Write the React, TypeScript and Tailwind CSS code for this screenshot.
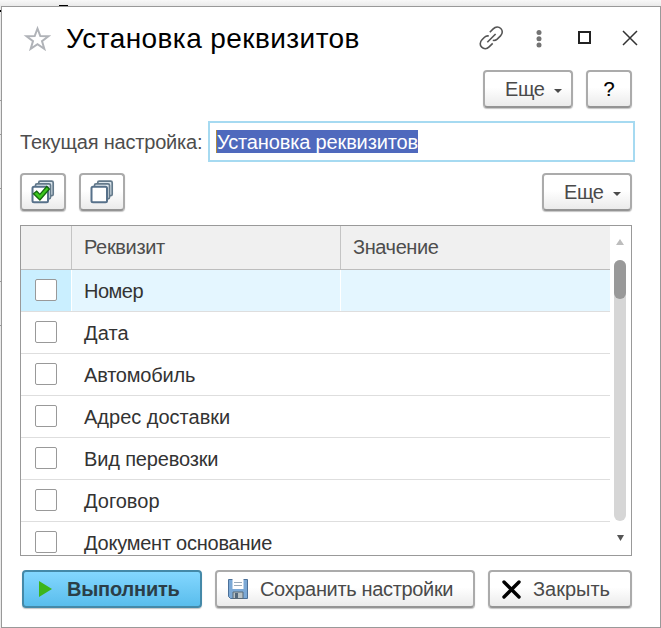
import type { ReactNode } from "react";

const rows = [
  { name: "Номер", tracking: "tracking-[-0.5px]" },
  { name: "Дата", tracking: "tracking-[0.1px]" },
  { name: "Автомобиль", tracking: "tracking-[-0.2px]" },
  { name: "Адрес доставки", tracking: "tracking-normal" },
  { name: "Вид перевозки", tracking: "tracking-[-0.15px]" },
  { name: "Договор", tracking: "tracking-normal" },
  { name: "Документ основание", tracking: "tracking-[-0.24px]" },
];

function Button({ className, children }: { className: string; children: ReactNode }) {
  return (
    <button
      className={
        "flex h-[38px] shrink-0 items-center rounded-[4px] border-2 border-[#ababab] border-b-[#949494] bg-linear-to-b from-white from-45% to-[#ebebeb] text-[#4a4a4a] shadow-[0_1px_1px_#c4c4c4] " +
        className
      }
    >
      {children}
    </button>
  );
}

function MoreButton() {
  return (
    <Button className="w-[90px] pl-[20px]">
      <span className="tracking-[-0.4px]">Еще</span>
      <svg className="ml-[9px] mt-[3px]" width="8" height="4" viewBox="0 0 8 4">
        <path d="M0 0h8L4 4z" fill="#4a4a4a" />
      </svg>
    </Button>
  );
}

function StackIcon({ checked }: { checked?: boolean }) {
  return (
    <svg className="mb-px" width="24" height="24" viewBox="0 0 24 24" fill="#fff" stroke="#63798a">
      <rect x="7.7" y="1.2" width="14.5" height="14.5" rx="1.5" strokeWidth="1.7" fill="#dbe5ec" />
      <rect x="4.5" y="3.8" width="15" height="15" rx="1.5" strokeWidth="1.7" fill="#e5edf2" />
      <rect x="1.5" y="6.7" width="15.5" height="15.5" rx="1.5" strokeWidth="2" stroke="#57718a" />
      {checked && (
        <path
          d="M2.5 13.8l3.2-2.6 3.2 3.2 6.8-7.9 2.7 2.5-9.5 11z"
          fill="#3cc71e"
          stroke="#12670e"
          strokeWidth="1.3"
        />
      )}
    </svg>
  );
}

export default function App() {
  return (
    <div className="relative h-[628px] w-[661px] overflow-hidden bg-linear-to-b from-[#f8f8f8] to-[#eaeaea] to-[6px] pl-px pt-1.5 font-['Liberation_Sans',Arial,sans-serif] text-[20px] leading-6">
      {/* edges of the page that lies under the dialog */}
      <span className="absolute left-[59px] top-[5px] h-px w-[9px] bg-black" />
      <span className="absolute left-0 top-[10px] h-[2px] w-px bg-black" />
      <span className="absolute left-0 top-[100px] h-px w-px bg-[#999]" />
      <span className="absolute left-0 top-[134px] h-px w-px bg-[#999]" />
      <span className="absolute left-0 top-[188px] h-px w-px bg-[#999]" />
      <span className="absolute left-0 top-[281px] h-px w-px bg-[#999]" />
      <span className="absolute left-0 top-[325px] h-px w-px bg-[#999]" />
      <div className="flex h-[622px] w-[660px] flex-col border border-[#999] bg-white">
        <header className="flex h-[63px] shrink-0 items-center pl-[21px] pr-[22px]">
          <svg className="mb-[2px]" width="28" height="26" viewBox="0 0 28 26" fill="none" stroke="#b0b3b8" strokeWidth="2">
            <path d="M14.5 3.5l2.8 7.5 8.2.2-6.5 4.9 2.3 7.7-6.8-4.7-6.8 4.7 2.3-7.7-6.5-4.9 8.2-.2z" />
          </svg>
          <h1 className="ml-[15px] whitespace-nowrap text-[28px] leading-8 tracking-[0.42px] text-black">
            Установка реквизитов
          </h1>
          <svg
            className="mb-[2px] ml-auto"
            width="26"
            height="26"
            viewBox="0 0 26 26"
            fill="none"
            stroke="#555"
            strokeWidth="1.6"
          >
            <path d="M10.8 7.2l3.4-3.3c2.3-2.3 5.6-2.3 7.6-.4s2 5.1-.3 7.4l-3.3 3.2c-1.2 1.1-2.7 1.6-4.4 1.2" />
            <path d="M9.8 11c-1.7-.3-3.2.2-4.3 1.3L3 14.8c-2.3 2.3-2.3 5.500-.3 7.400s5.100 2 7.400-.3l3.600-3.500" />
            <path d="M8.300 17.300l8.300-8.300" />
          </svg>
          <svg className="ml-[31px]" width="6" height="18" viewBox="0 0 6 18" fill="#737373">
            <circle cx="3" cy="2.5" r="2.5" />
            <circle cx="3" cy="8.7" r="2.5" />
            <circle cx="3" cy="14.9" r="2.5" />
          </svg>
          <svg className="mb-[2px] ml-[36px]" width="13" height="13" viewBox="0 0 13 13">
            <path d="M1 1h11v11H1z" fill="none" stroke="#222" strokeWidth="2" />
          </svg>
          <svg className="mb-[2px] ml-[31px]" width="16" height="16" viewBox="0 0 16 16">
            <path d="M1 1l14 14M15 1L1 15" stroke="#333" strokeWidth="1.500" />
          </svg>
        </header>

        <div className="flex h-[51px] shrink-0 justify-end gap-[13px] pr-[28px]">
          <MoreButton />
          <Button className="w-[46px] justify-center">
            <span className="text-black [-webkit-text-stroke:0.2px_#000]">?</span>
          </Button>
        </div>

        <label className="flex h-[41px] shrink-0 items-center pl-[18px] text-[#4d4d4d]">
          <span className="w-[188px] shrink-0 whitespace-nowrap tracking-[-0.19px]">Текущая настройка:</span>
          <span className="flex h-[41px] w-[427px] items-center border-2 border-[#a6daf1] bg-white pl-[6px]">
            <span className="h-[23px] whitespace-nowrap border-l border-[#b58c3c] bg-[#4f69bd] leading-6 tracking-[-0.15px] text-white">
              Установка реквизитов
            </span>
          </span>
        </label>

        <div className="mt-[11px] flex h-[52px] shrink-0 pl-[18px] pr-[28px]">
          <Button className="w-[46px] justify-center">
            <StackIcon checked />
          </Button>
          <Button className="ml-[13px] mr-auto w-[46px] justify-center">
            <StackIcon />
          </Button>
          <MoreButton />
        </div>

        <div className="ml-[18px] flex h-[331px] w-[612px] shrink-0 overflow-hidden border border-[#999]">
          <div className="flex w-[589px] shrink-0 flex-col">
            <div className="flex h-[44px] shrink-0 border-b border-[#bdbdbd] bg-[#f0f0f0] text-[#4d4d4d]">
              <div className="w-[51px] border-r border-[#c4c4c4]" />
              <div className="flex w-[269px] items-center border-r border-[#c4c4c4] pb-px pl-[12px] tracking-[-0.35px]">
                Реквизит
              </div>
              <div className="flex items-center pb-px pl-[12px] tracking-[-0.4px]">Значение</div>
            </div>
            {rows.map(({ name, tracking }, i) => (
              <div
                key={name}
                className={
                  "flex h-[42px] shrink-0 border-b border-[#dedede] text-[#333] " + (i === 0 ? "bg-[#e4f6ff]" : "")
                }
              >
                <div
                  className={
                    "flex w-[51px] shrink-0 items-start border-r border-white pl-[14px] pt-[9px] " +
                    (i === 0 ? "bg-[#caefff]" : "")
                  }
                >
                  <span className="size-[22px] rounded-[2px] border border-[#999] bg-white" />
                </div>
                <div
                  className={
                    "flex w-[269px] items-center whitespace-nowrap border-r border-white pl-[12px] pt-px " + tracking
                  }
                >
                  {name}
                </div>
              </div>
            ))}
          </div>
          <div className="flex flex-col items-center pl-1">
            <svg className="mt-[13px]" width="8" height="6" viewBox="0 0 8 6">
              <path d="M4 0l4 6H0z" fill="#bdbdbd" />
            </svg>
            <div className="mt-[15px] h-[261px] w-3 rounded-full bg-[#d6d6d6]">
              <div className="h-[39px] rounded-full bg-[#999]" />
            </div>
            <svg className="mt-[14px]" width="7" height="6" viewBox="0 0 7 6">
              <path d="M0 0h7L3.5 6z" fill="#555" />
            </svg>
          </div>
        </div>

        <footer className="mt-[14px] flex gap-[13px] whitespace-nowrap pl-5">
          <button className="flex h-[38px] w-[180px] items-center rounded-[4px] border-2 border-[#4489a8] bg-linear-to-b from-[#83d7ff] to-[#59bdec] pl-[15px] font-bold text-[#2b3e48] shadow-[0_1px_1px_#c4c4c4]">
            <svg width="13" height="16" viewBox="0 0 13 16">
              <path d="M0 0l13 8-13 8z" fill="#3db51c" />
            </svg>
            <span className="ml-[15px] tracking-[-0.2px]">Выполнить</span>
          </button>
          <Button className="w-[260px] pl-[11px]">
            <svg width="20" height="20" viewBox="0 0 20 20">
              <path d="M.5.5h19v19H2.500l-2-2z" fill="#7ca9d6" stroke="#4b7099" />
              <path d="M4.500 0h11v10h-11z" fill="#fff" />
              <path d="M6 3.500h8M6 6.500h8" stroke="#9aabba" />
              <path d="M5 13h10v6.500H5z" fill="#b8c2c6" stroke="#596a78" />
              <path d="M7 14h3v5H7z" fill="#52677b" />
            </svg>
            <span className="ml-[12px] tracking-[-0.34px]">Сохранить настройки</span>
          </Button>
          <Button className="w-[144px] pl-[12px]">
            <svg width="19" height="19" viewBox="0 0 19 19">
              <path d="M2 2l15 15M17 2L2 17" stroke="#000" strokeWidth="3.400" strokeLinecap="round" />
            </svg>
            <span className="ml-[12px]">Закрыть</span>
          </Button>
        </footer>
      </div>
    </div>
  );
}
